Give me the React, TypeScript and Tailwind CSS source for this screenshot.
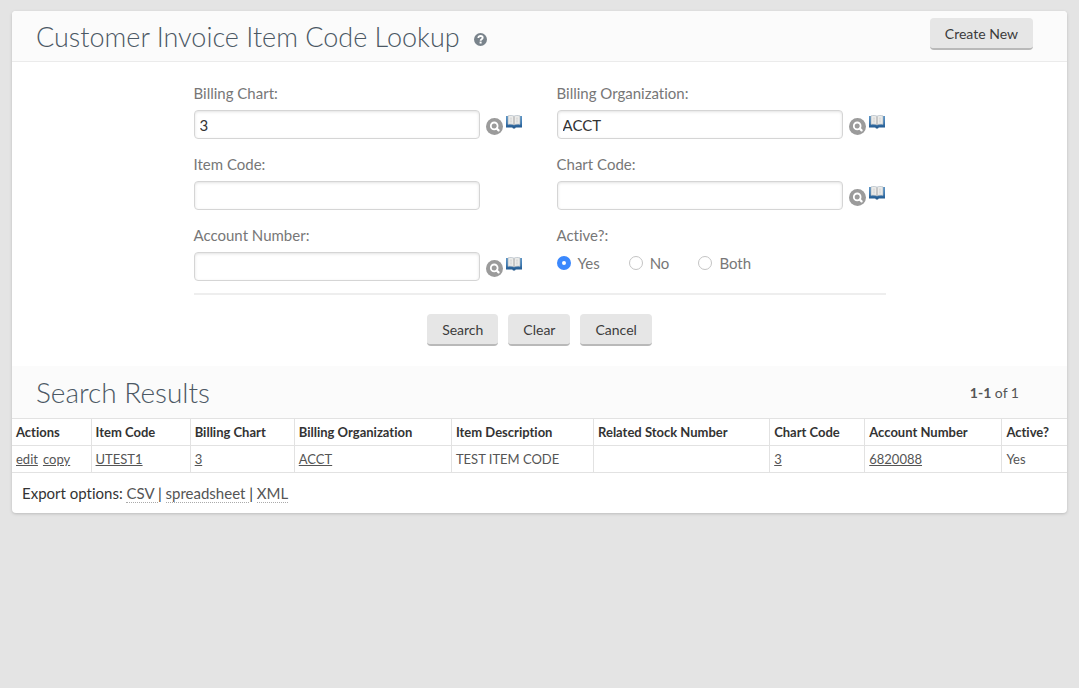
import { useId, type ReactNode } from "react";

function HelpIcon() {
  return (
    <svg viewBox="0 0 13 13" className="size-[13px]" aria-hidden="true">
      <circle cx="6.5" cy="6.5" r="6.5" fill="#79838b" />
      <path d="M4.300 5.100C4.300 3.700 5.300 3 6.600 3c1.200 0 2.100.7 2.100 1.800 0 1.500-2.100 1.500-2.100 2.900" fill="none" stroke="#fff" strokeWidth="1.800" />
      <rect x="5.600" y="8.600" width="2" height="1.900" fill="#fff" />
    </svg>
  );
}

function LookupIcon() {
  return (
    <svg viewBox="0 0 17 17" className="size-[17px]" aria-hidden="true">
      <circle cx="8.500" cy="8.500" r="8.500" fill="#9b9b9b" />
      <circle cx="8.200" cy="7.900" r="3.400" fill="none" stroke="#fff" strokeWidth="1.800" />
      <path d="M10.700 10.500l1.900 1.900" stroke="#fff" strokeWidth="2.200" strokeLinecap="round" />
    </svg>
  );
}

function BookIcon() {
  return (
    <svg viewBox="0 0 16 14" className="h-[14px] w-4" aria-hidden="true">
      <defs>
        <linearGradient id="cover" x1="0" y1="0" x2="0" y2="1">
          <stop offset="0" stopColor="#5f96c6" />
          <stop offset="0.500" stopColor="#3f7cb5" />
          <stop offset="1" stopColor="#1f5488" />
        </linearGradient>
      </defs>
      <path d="M0 1h16v11.500H9.700L9 13.500H7l-.7-1H0z" fill="url(#cover)" />
      <path d="M2 .9C4 .3 6.500.3 8 1.200 9.500.3 12 .3 14 .9v8.500c-2-.4-4.500-.3-6 .6-1.500-.9-4-1-6-.6z" fill="#ececea" stroke="#a3afba" strokeWidth="0.600" />
      <path d="M7.400 1.400L8 1.700l.6-.3v8L8 9.800l-.6-.4z" fill="#b0b0b0" />
      <path d="M3.800 3.200h2.200M3.800 5h2.200M3.800 6.800h2.200M10 3.200h2.200M10 5h2.200M10 6.800h2.200" stroke="#d0d0d0" strokeWidth="0.800" />
    </svg>
  );
}

function Field({ label, value, lookup = true }: { label: string; value?: string; lookup?: boolean }) {
  const id = useId();
  return (
    <div>
      <label htmlFor={id} className="mb-[7px] block text-[15px] leading-5 text-[#777]">
        {label}
      </label>
      <div className="flex items-end">
        <input
          id={id}
          type="text"
          defaultValue={value}
          className="h-[29px] min-w-0 flex-1 rounded border border-[#d5d5d5] bg-white px-[5px] text-[15px] text-[#333] shadow-[inset_0_1px_3px_#e2e2e2] outline-none focus:border-blue-400"
        />
        <div className="flex w-[43px] items-start gap-[3px] pb-1 pl-[6px]">
          {lookup && (
            <>
              <button type="button" aria-label={`Look up ${label}`} className="pt-[3px]">
                <LookupIcon />
              </button>
              <button type="button" aria-label={`Details for ${label}`}>
                <BookIcon />
              </button>
            </>
          )}
        </div>
      </div>
    </div>
  );
}

function Radio({ label, checked }: { label: string; checked?: boolean }) {
  return (
    <label className="flex items-center gap-[7px]">
      <input
        type="radio"
        name="active"
        defaultChecked={checked}
        className="size-[14px] appearance-none rounded-full border border-[#c4c4c4] bg-white checked:border-[5px] checked:border-[#3b88fd]"
      />
      {label}
    </label>
  );
}

function Button({ children, type = "button" }: { children: ReactNode; type?: "button" | "submit" | "reset" }) {
  return (
    <button
      type={type}
      className="h-8 rounded border-b-2 border-[#b9b9b9] bg-[#e6e6e6] px-[15px] text-[14px] text-[#3c3c3c] hover:bg-[#dcdcdc]"
    >
      {children}
    </button>
  );
}

const columns = [
  { name: "Item Code", value: "UTEST1", link: true, width: "w-[99px]" },
  { name: "Billing Chart", value: "3", link: true, width: "w-[104px]" },
  { name: "Billing Organization", value: "ACCT", link: true, width: "w-[157px]" },
  { name: "Item Description", value: "TEST ITEM CODE", link: false, width: "w-[142px]" },
  { name: "Related Stock Number", value: "", link: false, width: "w-[176px]" },
  { name: "Chart Code", value: "3", link: true, width: "w-[95px]" },
  { name: "Account Number", value: "6820088", link: true, width: "w-[137px]" },
  { name: "Active?", value: "Yes", link: false, width: "w-[65px]" },
];

const exports = ["CSV", "spreadsheet", "XML"];

export default function App() {
  return (
    <div className="min-h-screen bg-[#e4e4e4] px-3 pt-[11px] pb-6 font-['Lato',sans-serif] [font-variant-ligatures:none]">
      <main className="overflow-hidden rounded bg-white shadow-[0_1px_3px_#bbb]">
        <header className="flex h-[51px] items-start justify-between border-b border-[#ebebeb] bg-[#fbfbfb] pr-[34px] pl-6">
          <div className="flex items-center gap-[14px] pt-2">
            <h1 className="text-[27px] leading-9 font-light text-[#4b5864]">Customer Invoice Item Code Lookup</h1>
            <a href="#help" aria-label="Help" className="pt-[5px]">
              <HelpIcon />
            </a>
          </div>
          <div className="pt-[7px]">
            <Button>Create New</Button>
          </div>
        </header>

        <form className="mx-auto max-w-[692px] pt-[21px] pb-5" onSubmit={(e) => e.preventDefault()}>
          <div className="grid grid-cols-2 gap-x-[34px] gap-y-[15px] border-b-2 border-[#eeeeee] pb-3">
            <Field label="Billing Chart:" value="3" />
            <Field label="Billing Organization:" value="ACCT" />
            <Field label="Item Code:" lookup={false} />
            <Field label="Chart Code:" />
            <Field label="Account Number:" />
            <fieldset className="text-[15px] text-[#777]">
              <legend className="mb-[7px] leading-5">Active?:</legend>
              <div className="flex gap-[29px] leading-[22px]">
                <Radio label="Yes" checked />
                <Radio label="No" />
                <Radio label="Both" />
              </div>
            </fieldset>
          </div>
          <div className="flex justify-center gap-[10px] pt-[19px]">
            <Button type="submit">Search</Button>
            <Button type="reset">Clear</Button>
            <Button>Cancel</Button>
          </div>
        </form>

        <section>
          <div className="flex h-[52px] items-center justify-between bg-[#fbfbfb] pr-12 pl-6">
            <h2 className="text-[28px] leading-9 font-light text-[#4b5864]">Search Results</h2>
            <p className="text-[14px] text-[#555]">
              <strong>1-1</strong> of 1
            </p>
          </div>
          <table className="w-full table-fixed border-collapse text-left text-[13px] leading-[18px] text-[#555]">
            <thead className="text-[#333]">
              <tr className="border-y border-[#e2e2e2]">
                <th className="w-[79px] py-1 pl-1 whitespace-nowrap">Actions</th>
                {columns.map((c) => (
                  <th key={c.name} className={`${c.width} border-l border-[#e2e2e2] py-1 pl-1 whitespace-nowrap`}>
                    {c.name}
                  </th>
                ))}
              </tr>
            </thead>
            <tbody>
              <tr className="border-b border-[#e2e2e2]">
                <td className="py-1 pl-1 whitespace-nowrap">
                  <a href="#edit" className="mr-[5px] underline">edit</a>
                  <a href="#copy" className="underline">copy</a>
                </td>
                {columns.map((c) => (
                  <td key={c.name} className="border-l border-[#e2e2e2] py-1 pl-1 whitespace-nowrap">
                    {c.link ? <a href="#record" className="underline">{c.value}</a> : c.value}
                  </td>
                ))}
              </tr>
            </tbody>
          </table>
          <p className="px-[10px] py-[10px] text-[15px] leading-5 text-[#333]">
            Export options:{" "}
            {exports.map((name, i) => (
              <span key={name}>
                {i > 0 && "| "}
                <a href={`#${name}`} className="border-b border-dotted border-[#aaa] text-[#555]">
                  {name}
                  {i < exports.length - 1 && " "}
                </a>
              </span>
            ))}
          </p>
        </section>
      </main>
    </div>
  );
}
